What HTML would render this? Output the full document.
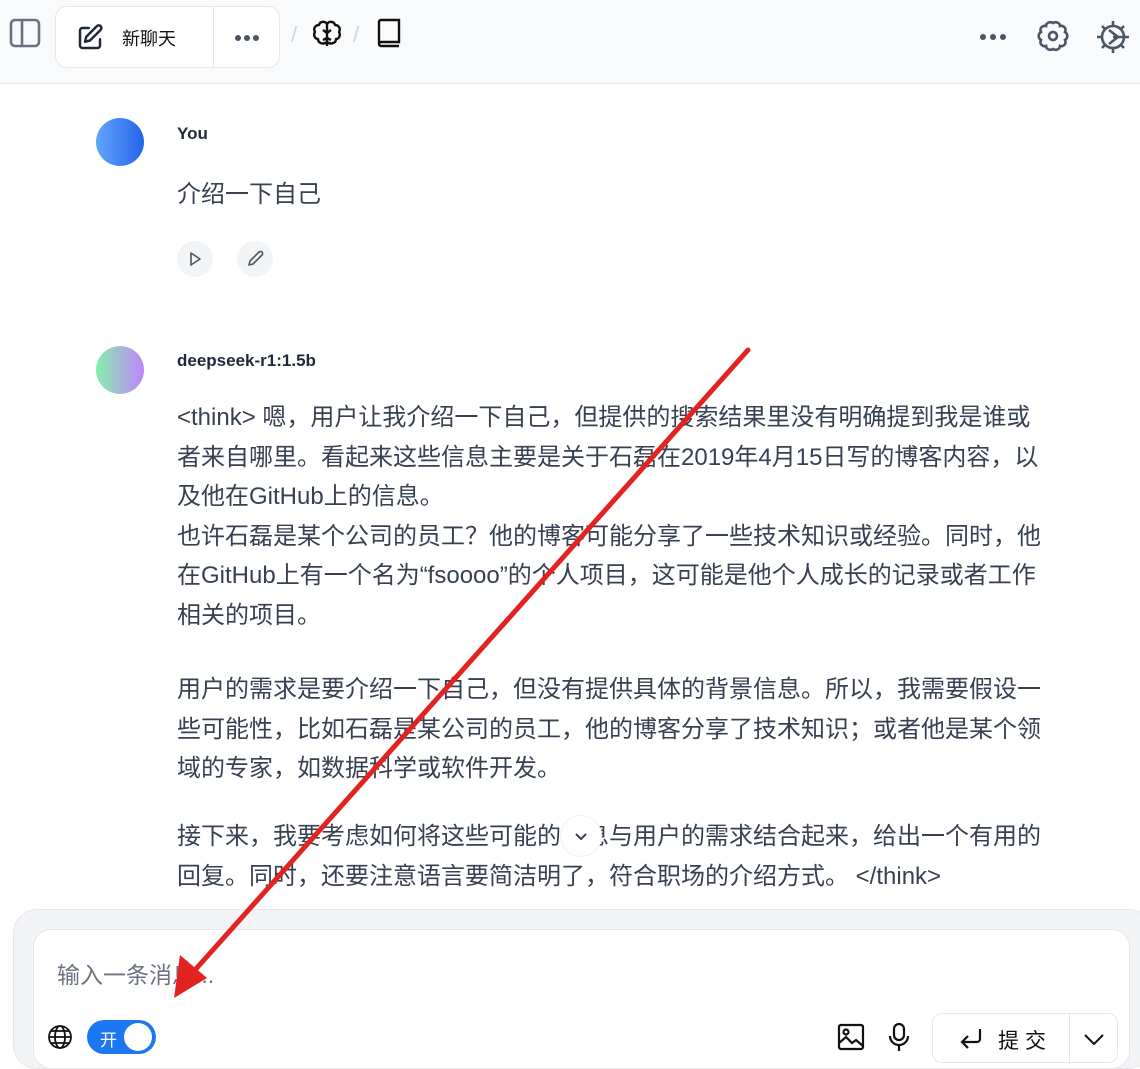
<!DOCTYPE html>
<html><head><meta charset="utf-8">
<style>
*{box-sizing:border-box;margin:0;padding:0}
body{width:1140px;height:1057px;overflow:hidden;background:#fff;font-family:"Liberation Sans","Noto Sans CJK SC",sans-serif;position:relative;color:#1f2937}
.hdr{position:absolute;left:0;top:0;width:1140px;height:84px;background:#f9fafb;border-bottom:1px solid #e5e7eb}
.pill{position:absolute;left:55px;top:6px;width:225px;height:62px;background:#fff;border:1px solid #e5e7eb;border-radius:12px}
.pill .sep{position:absolute;left:157px;top:0;width:1px;height:60px;background:#e5e7eb}
.abs{position:absolute}
.av{position:absolute;width:48px;height:48px;border-radius:50%}
.name{position:absolute;font-weight:bold;font-size:17px;color:#1f2937}
.body{position:absolute;left:177px;font-size:24px;color:#374151;line-height:39.5px;white-space:nowrap}
.ib{position:absolute;width:36px;height:36px;border-radius:50%;background:#f3f4f6}
</style></head><body>
<div class="hdr">
 <svg class="abs" style="left:9px;top:17px" width="32" height="32" viewBox="0 0 32 32" fill="none" stroke="#6b7280" stroke-width="2.6"><rect x="2" y="3" width="28" height="26" rx="4"/><line x1="13" y1="3" x2="13" y2="29"/></svg>
 <div class="pill"><div class="sep"></div>
  <svg class="abs" style="left:19px;top:16px" width="30" height="30" viewBox="0 0 24 24" fill="none" stroke="#1f2937" stroke-width="2" stroke-linecap="round" stroke-linejoin="round"><path d="M11 4H6a2 2 0 0 0-2 2v12a2 2 0 0 0 2 2h12a2 2 0 0 0 2-2v-5"/><path d="M17.5 2.5a2.1 2.1 0 0 1 3 3L12 14l-4 1 1-4z"/></svg>
  <div class="abs" style="left:66px;top:18px;font-size:18px;color:#111">新聊天</div>
  <svg class="abs" style="left:178px;top:27px" width="26" height="8"><circle cx="4" cy="4" r="3" fill="#4b5563"/><circle cx="13" cy="4" r="3" fill="#4b5563"/><circle cx="22" cy="4" r="3" fill="#4b5563"/></svg>
 </div>
 <div class="abs" style="left:291px;top:22px;font-size:22px;color:#d1d5db">/</div>
 <svg class="abs" style="left:312px;top:20px" width="30" height="28" viewBox="0 0 30 28" fill="none" stroke="#111" stroke-width="2.4" stroke-linejoin="round"><path d="M15 4c-2-3-7-3-8 1-4 0-6 4-4 7-2 3 0 7 3 7 0 4 5 6 9 3 4 3 9 1 9-3 3 0 5-4 3-7 2-3 0-7-4-7-1-4-6-4-8-1z"/><path d="M15 4v22M15 13l-4-3M15 13l4-3M15 18l-4 2M15 18l4 2"/></svg>
 <div class="abs" style="left:353px;top:22px;font-size:22px;color:#d1d5db">/</div>
 <svg class="abs" style="left:376px;top:18px" width="26" height="30" viewBox="0 0 26 30" fill="none" stroke="#111" stroke-width="2.4"><path d="M3 25V4a2 2 0 0 1 2-2h18v22H5a2 2 0 0 0 0 4h18"/></svg>
 <svg class="abs" style="left:979px;top:33px" width="28" height="8"><circle cx="4" cy="4" r="3" fill="#4b5563"/><circle cx="14" cy="4" r="3" fill="#4b5563"/><circle cx="24" cy="4" r="3" fill="#4b5563"/></svg>
 <svg class="abs" style="left:1035px;top:19px" width="36" height="36" viewBox="0 0 36 36" fill="none" stroke="#4b5563" stroke-width="2.6"><path d="M18 4c3-2 7 0 7 3 3-1 7 2 5 6 3 2 3 6 0 8 2 4-2 7-5 6 0 3-4 5-7 3-3 2-7 0-7-3-3 1-7-2-5-6-3-2-3-6 0-8-2-4 2-7 5-6 0-3 4-5 7-3z"/><circle cx="18" cy="17" r="4"/></svg>
 <svg class="abs" style="left:1095px;top:19px" width="36" height="36" viewBox="0 0 36 36" fill="none" stroke="#4b5563" stroke-width="2.6"><circle cx="18" cy="18" r="11"/><path d="M18 2v5M18 29v5M2 18h5M29 18h5M7 7l3 3M26 26l3 3M7 29l3-3M26 10l3-3"/><path d="M14 11l9 7-9 7M18 18h11"/></svg>
</div>

<div class="av" style="left:96px;top:118px;background:linear-gradient(90deg,#60a5fa,#2563eb)"></div>
<div class="name" style="left:177px;top:124px">You</div>
<div class="abs" style="left:177px;top:174px;font-size:24px;color:#374151">介绍一下自己</div>
<div class="ib" style="left:177px;top:241px"><svg width="36" height="36" viewBox="0 0 36 36" fill="none" stroke="#4b5563" stroke-width="1.6" stroke-linejoin="round"><path d="M14 12l9 6-9 6z"/></svg></div>
<div class="ib" style="left:237px;top:241px"><svg width="36" height="36" viewBox="0 0 36 36" fill="none" stroke="#4b5563" stroke-width="1.6" stroke-linejoin="round"><path d="M12 24l1-4 9-9a1.6 1.6 0 0 1 3 3l-9 9z"/></svg></div>

<div class="av" style="left:96px;top:346px;background:linear-gradient(90deg,#86efac,#c084fc)"></div>
<div class="name" style="left:177px;top:351px">deepseek-r1:1.5b</div>
<div class="body" style="top:398px">&lt;think&gt; 嗯，用户让我介绍一下自己，但提供的搜索结果里没有明确提到我是谁或<br>者来自哪里。看起来这些信息主要是关于石磊在2019年4月15日写的博客内容，以<br>及他在GitHub上的信息。<br>也许石磊是某个公司的员工？他的博客可能分享了一些技术知识或经验。同时，他<br>在GitHub上有一个名为“fsoooo”的个人项目，这可能是他个人成长的记录或者工作<br>相关的项目。</div>
<div class="body" style="top:670px">用户的需求是要介绍一下自己，但没有提供具体的背景信息。所以，我需要假设一<br>些可能性，比如石磊是某公司的员工，他的博客分享了技术知识；或者他是某个领<br>域的专家，如数据科学或软件开发。</div>
<div class="body" style="top:817px">接下来，我要考虑如何将这些可能的信息与用户的需求结合起来，给出一个有用的<br>回复。同时，还要注意语言要简洁明了，符合职场的介绍方式。 &lt;/think&gt;</div>
<div class="abs" style="left:560px;top:815px;width:42px;height:42px;border-radius:50%;background:#fff;border:1px solid #f0f0f0"><svg width="40" height="40" viewBox="0 0 40 40" fill="none" stroke="#374151" stroke-width="2"><path d="M15 18l5 5 5-5"/></svg></div>

<div class="abs" style="left:13px;top:909px;width:1140px;height:160px;background:#f3f4f6;border-radius:24px;border:1px solid #e5e7eb"></div>
<div class="abs" style="left:33px;top:929px;width:1097px;height:140px;background:#fff;border-radius:18px;border:1px solid #e5e7eb"></div>
<div class="abs" style="left:57px;top:956px;font-size:23px;color:#6b7280">输入一条消息...</div>
<svg class="abs" style="left:47px;top:1024px" width="26" height="26" viewBox="0 0 26 26" fill="none" stroke="#111" stroke-width="1.8"><circle cx="13" cy="13" r="11"/><ellipse cx="13" cy="13" rx="5" ry="11"/><path d="M2 13h22M4 7h18M4 19h18"/></svg>
<div class="abs" style="left:87px;top:1020px;width:69px;height:34px;border-radius:17px;background:#1d77f2"><div class="abs" style="left:13px;top:6px;color:#fff;font-size:17px">开</div><div class="abs" style="left:37px;top:3px;width:28px;height:28px;border-radius:50%;background:#fff"></div></div>
<svg class="abs" style="left:837px;top:1023px" width="28" height="28" viewBox="0 0 28 28" fill="none" stroke="#111" stroke-width="2.2"><rect x="2" y="2" width="24" height="24" rx="2"/><circle cx="9" cy="9" r="2.5"/><path d="M2 20l7-6 6 6 4-3 7 6"/></svg>
<svg class="abs" style="left:887px;top:1022px" width="24" height="30" viewBox="0 0 24 30" fill="none" stroke="#111" stroke-width="2.2"><rect x="7" y="2" width="10" height="16" rx="5"/><path d="M3 14a9 9 0 0 0 18 0M12 23v6"/></svg>
<div class="abs" style="left:932px;top:1013px;width:186px;height:50px;border:1px solid #e5e7eb;border-radius:10px;background:#fff"><div class="abs" style="left:136px;top:0;width:1px;height:50px;background:#e5e7eb"></div>
<svg class="abs" style="left:25px;top:12px" width="26" height="26" viewBox="0 0 26 26" fill="none" stroke="#111" stroke-width="2.2"><path d="M22 3v10a3 3 0 0 1-3 3H4M10 10l-6 6 6 6"/></svg>
<div class="abs" style="left:65px;top:11px;font-size:21px;color:#111;letter-spacing:6px">提交</div>
<svg class="abs" style="left:148px;top:14px" width="26" height="22" viewBox="0 0 26 22" fill="none" stroke="#111" stroke-width="2"><path d="M4 7l9 9 9-9"/></svg></div>

<svg class="abs" style="left:0;top:0" width="1140" height="1057"><line x1="748" y1="350" x2="195" y2="970" stroke="#e32222" stroke-width="5" stroke-linecap="round"/><polygon points="174,998 180,955 207,978" fill="#e32222"/></svg>
</body></html>
